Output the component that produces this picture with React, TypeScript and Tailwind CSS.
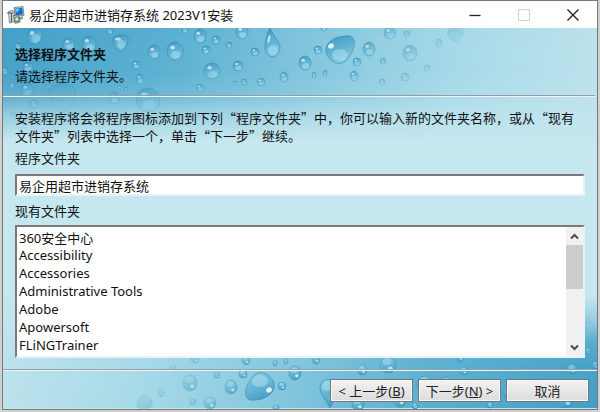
import { useState } from "react";

const folders = [
  "360安全中心",
  "Accessibility",
  "Accessories",
  "Administrative Tools",
  "Adobe",
  "Apowersoft",
  "FLiNGTrainer",
];

// cx, cy, rx, ry
const drops = [
  [69, 44, 6, 6], [89, 44, 7, 8], [18, 46, 3, 3], [154, 52, 6, 7], [175, 51, 8, 9],
  [200, 36, 6, 7], [216, 40, 4, 4], [206, 50, 4, 4], [229, 45, 3, 3], [242, 32, 6, 7],
  [255, 52, 4, 4], [212, 71, 8, 8], [238, 66, 5, 5], [284, 77, 4, 5], [136, 65, 4, 4],
  [140, 79, 4, 5], [28, 67, 5, 5], [5, 71, 3, 4], [27, 90, 6, 7], [12, 85, 3, 3],
  [185, 30, 3, 3], [110, 31, 3, 3], [200, 88, 4, 4], [126, 89, 2, 2], [119, 87, 2, 2],
  [244, 82, 3, 3], [235, 83, 2, 2], [261, 82, 4, 4], [305, 63, 6, 7], [318, 50, 4, 4],
  [369, 49, 6, 7], [390, 33, 6, 6], [407, 34, 3, 3], [410, 53, 7, 8], [357, 62, 4, 4],
  [383, 61, 3, 3], [314, 75, 2, 3], [325, 73, 2, 3], [354, 76, 4, 5], [382, 82, 3, 3],
  [405, 77, 4, 4], [439, 43, 3, 4], [427, 68, 3, 3], [324, 28, 3, 3], [114, 98, 5, 6],
  [34, 104, 4, 4], [13, 115, 3, 3], [148, 100, 12, 12],
];

const Droplets = () => (
  <g>
    <rect x="0" y="28" width="600" height="112" fill="url(#water)" mask="url(#fadeDown)" />
    <g mask="url(#fadeRight)">
      {drops.map(([cx, cy, rx, ry]) => (
        <g key={`${cx}-${cy}`}>
          <ellipse cx={cx} cy={cy} rx={rx} ry={ry} fill="url(#drop)" stroke="#2680ad" strokeOpacity="0.55" strokeWidth="0.9" />
          <ellipse cx={cx + rx * 0.1} cy={cy + ry * 0.4} rx={rx * 0.55} ry={ry * 0.4} fill="#b5e6f3" fillOpacity="0.5" />
          <ellipse cx={cx - rx * 0.3} cy={cy - ry * 0.4} rx={rx * 0.3} ry={ry * 0.22} fill="#fff" fillOpacity="0.75" />
        </g>
      ))}
      <g fill="url(#drop)" stroke="#2680ad" strokeOpacity="0.6" strokeWidth="1">
        <path d="M28 32C31 28 40 27 42 32C44 37 39 44 35 44C31 44 26 37 28 32Z" />
        <path d="M113 38C116 34 126 34 128 38C129 42 125 50 121 51C117 50 111 42 113 38Z" />
        <path d="M270 28C267 32 265 42 265 47C265 53 268 57 273 57C277 56 280 52 280 47C279 41 273 35 270 28Z" />
        <path d="M50 88C57 82 71 82 75 89C77 96 71 110 64 113C57 111 45 96 50 88Z" fillOpacity="0.6" strokeOpacity="0.4" />
        <path d="M326 48C328 39 341 35 350 36C358 39 354 50 349 57C344 65 337 65 331 60C327 56 325 53 326 48Z" />
        <path d="M448 31C451 25 461 25 463 30C464 35 459 41 456 41C452 41 446 36 448 31Z" />
      </g>
      <g fill="#b5e6f3" fillOpacity="0.5">
        <ellipse cx="36" cy="38" rx="4" ry="4" />
        <ellipse cx="121" cy="44" rx="4" ry="4" />
        <ellipse cx="273" cy="50" rx="5" ry="5" />
        <ellipse cx="340" cy="55" rx="8" ry="6" />
      </g>
      <ellipse cx="32" cy="33" rx="2" ry="2" fill="#fff" fillOpacity="0.8" />
      <ellipse cx="118" cy="39" rx="3" ry="1.5" fill="#fff" fillOpacity="0.7" />
      <ellipse cx="269" cy="39" rx="1.2" ry="4" fill="#fff" fillOpacity="0.7" transform="rotate(12 269 39)" />
      <ellipse cx="331" cy="46" rx="3" ry="2.5" fill="#fff" fillOpacity="0.85" transform="rotate(-35 331 46)" />
    </g>
  </g>
);

const WaterBackground = () => (
  <svg className="absolute inset-0 h-full w-full" viewBox="3 28 594 381" preserveAspectRatio="none" aria-hidden="true">
    <defs>
      <linearGradient id="water" x1="0" y1="0" x2="1" y2="0">
        <stop offset="0" stopColor="#429fc6" />
        <stop offset="0.3" stopColor="#5bb0d0" />
        <stop offset="0.5" stopColor="#7ec3dc" />
        <stop offset="0.75" stopColor="#a4d8e7" />
        <stop offset="1" stopColor="#bce2ec" />
      </linearGradient>
      <linearGradient id="fall" gradientUnits="userSpaceOnUse" x1="0" y1="28" x2="0" y2="140">
        <stop offset="0" stopColor="#fff" />
        <stop offset="0.4" stopColor="#f4f4f4" />
        <stop offset="0.6" stopColor="#cfcfcf" />
        <stop offset="0.76" stopColor="#666" />
        <stop offset="1" stopColor="#000" />
      </linearGradient>
      <linearGradient id="dropFade" gradientUnits="userSpaceOnUse" x1="0" y1="0" x2="470" y2="0">
        <stop offset="0" stopColor="#bbb" />
        <stop offset="0.25" stopColor="#ddd" />
        <stop offset="0.72" stopColor="#eee" />
        <stop offset="0.85" stopColor="#777" />
        <stop offset="1" stopColor="#333" />
      </linearGradient>
      <linearGradient id="dropSink" gradientUnits="userSpaceOnUse" x1="0" y1="60" x2="0" y2="118">
        <stop offset="0" stopColor="#000" stopOpacity="0" />
        <stop offset="1" stopColor="#000" stopOpacity="0.75" />
      </linearGradient>
      <linearGradient id="drop" x1="0" y1="0" x2="0.3" y2="1">
        <stop offset="0" stopColor="#3a93bf" />
        <stop offset="0.5" stopColor="#5aaed1" />
        <stop offset="1" stopColor="#7fc6de" />
      </linearGradient>
      <mask id="fadeDown" maskUnits="userSpaceOnUse" x="0" y="28" width="600" height="112">
        <rect x="0" y="28" width="600" height="112" fill="url(#fall)" />
      </mask>
      <mask id="fadeRight" maskUnits="userSpaceOnUse" x="0" y="20" width="600" height="120">
        <rect x="0" y="20" width="600" height="120" fill="url(#dropFade)" />
        <rect x="0" y="20" width="600" height="120" fill="url(#dropSink)" />
      </mask>
    </defs>
    <rect x="0" y="0" width="600" height="412" fill="#c5e7ef" />
    <Droplets />
    <g transform="rotate(180 300 218)">
      <Droplets />
    </g>
  </svg>
);

const SetupIcon = () => (
  <svg width="18" height="18" viewBox="0 0 18 18" aria-hidden="true">
    <path d="M7 1.5L16 0.5L17 9.5L8 10.5Z" fill="#c3ccd2" stroke="#5a6670" strokeWidth="0.7" />
    <path d="M8.2 2.6L15.2 1.8L15.9 8.5L8.9 9.3Z" fill="#1a6ad0" />
    <path d="M8.5 3L13 2.4L10 7Z" fill="#62d6f4" />
    <path d="M12 11L16 10.5V13L12.5 14Z" fill="#8f989d" />
    <path d="M1.5 5.5L6 4.5L7.5 6.5V15.5L2.5 17Z" fill="#dfe1e2" stroke="#68706f" strokeWidth="0.8" />
    <path d="M0 7H6.5M4.5 7.5V16" stroke="#4e5558" strokeWidth="1.2" />
    <path d="M6.5 9.5L11.5 9L13 16L8 17.3Z" fill="#eceee8" stroke="#454d49" strokeWidth="0.8" />
    <circle cx="9.7" cy="13.2" r="2.6" fill="#9fc6a2" stroke="#4e7254" strokeWidth="0.8" />
    <circle cx="9.7" cy="13.2" r="0.9" fill="#fff" />
  </svg>
);

const Chevron = ({ d }: { d: string }) => (
  <svg width="9" height="7" viewBox="0 0 9 7" fill="none" stroke="#4a4a4a" strokeWidth="2" aria-hidden="true">
    <path d={d} />
  </svg>
);

const Rule = () => <div className="h-[2px] border-t border-t-[#969ea3] bg-[#f3f3f3]"></div>;

const buttonClass =
  "flex h-[23px] w-[83px] items-center justify-center whitespace-pre border border-[#70787c] bg-linear-to-b from-[#f3f3f3] to-[#dcdcdc] text-[13px] leading-[18px] text-[#222] shadow-[inset_0_0_0_1px_#f8f8f8]";

const fieldBorder = "border-2 border-t-[#7d797a] border-l-[#7d797a] border-r-[#e9f2f4] border-b-[#e9f2f4]";

const App = () => {
  const [folder, setFolder] = useState("易企用超市进销存系统");

  return (
    <div
      lang="zh-CN"
      className="min-h-screen bg-[#d0d0d0] px-[2px] pb-[2px] text-[13px] leading-[18px] text-[#111] font-['Noto_Sans','Noto_Sans_CJK_SC',sans-serif]"
    >
      <main className="flex min-h-[calc(100vh-2px)] flex-col border border-[#777]">
        <header className="flex h-[27px] items-center bg-white pl-1">
          <SetupIcon />
          <h1 className="flex-1 pl-1">易企用超市进销存系统 2023V1安装</h1>
          <button type="button" aria-label="最小化" className="flex h-full w-[49px] items-center justify-center">
            <svg width="12" height="12" viewBox="0 0 12 12" stroke="#222" strokeWidth="1.3"><path d="M0.5 6.5H11.5" /></svg>
          </button>
          <button type="button" aria-label="最大化" disabled className="flex h-full w-[49px] items-center justify-center">
            <svg width="12" height="12" viewBox="0 0 12 12" fill="none" stroke="#cfcfcf"><path d="M0.5 0.5H11.5V11.5H0.5Z" /></svg>
          </button>
          <button type="button" aria-label="关闭" className="flex h-full w-[49px] items-center justify-center">
            <svg width="12" height="12" viewBox="0 0 12 12" stroke="#222" strokeWidth="1.4"><path d="M0.5 0.5L11.5 11.5M11.5 0.5L0.5 11.5" /></svg>
          </button>
        </header>

        <div className="relative flex flex-1 flex-col">
          <WaterBackground />

          <div className="relative flex flex-col gap-1 px-3 pt-[17px] pb-[10px]">
            <h2 className="font-bold">选择程序文件夹</h2>
            <p>请选择程序文件夹。</p>
          </div>
          <div className="relative pr-[2px]">
            <Rule />
          </div>

          <div className="relative flex flex-1 flex-col px-3 pt-3 pb-[11px]">
            <p className="font-['Noto_Sans_CJK_SC',sans-serif]">
              安装程序将会将程序图标添加到下列“程序文件夹”中，你可以输入新的文件夹名称，或从“现有文件夹”列表中选择一个，单击“下一步”继续。
            </p>
            <label htmlFor="folder" className="mt-1">程序文件夹</label>
            <input
              id="folder"
              value={folder}
              onChange={(e) => setFolder(e.target.value)}
              className={`mt-[7px] h-[22px] w-full bg-white px-[2px] outline-none ${fieldBorder}`}
            />
            <label htmlFor="existing" className="mt-[6px]">现有文件夹</label>
            <div className={`mt-[5px] flex flex-1 bg-white ${fieldBorder}`}>
              <select
                id="existing"
                size={7}
                onChange={(e) => setFolder(e.target.value)}
                className="h-[129px] flex-1 appearance-none overflow-hidden pt-[1px] outline-none"
              >
                {folders.map((name) => (
                  <option key={name} value={name} className="h-[18px] px-[2px] py-0 leading-[18px]">
                    {name}
                  </option>
                ))}
              </select>
              <div className="flex w-[17px] flex-col bg-[#f0f0f0]">
                <button type="button" aria-label="向上" className="flex h-[18px] items-center justify-center">
                  <Chevron d="M1 5.5L4.5 2L8 5.5" />
                </button>
                <div className="h-11 bg-[#cdcdcd]"></div>
                <button type="button" aria-label="向下" className="mt-auto flex h-[18px] items-center justify-center">
                  <Chevron d="M1 1.5L4.5 5L8 1.5" />
                </button>
              </div>
            </div>
          </div>

          <div className="relative">
            <Rule />
          </div>
          <footer className="relative flex justify-end gap-[5px] pt-2 pr-2 pb-[7px]">
            <button type="button" className={buttonClass}>&lt; 上一步(<u>B</u>)</button>
            <button type="button" className={buttonClass}>下一步(<u>N</u>) &gt;</button>
            <button type="button" className={buttonClass}>取消</button>
          </footer>
        </div>
      </main>
    </div>
  );
};

export default App;
